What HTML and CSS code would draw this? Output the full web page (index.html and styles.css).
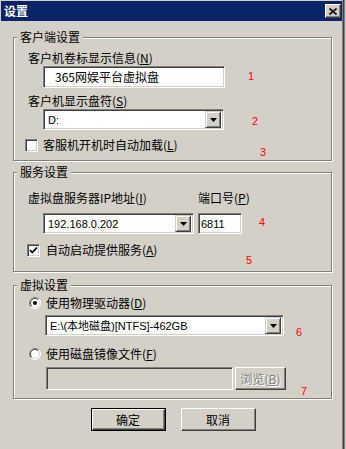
FILE: index.html
```html
<!DOCTYPE html>
<html lang="zh-CN">
<head>
    <meta charset="UTF-8">
    <meta name="viewport" content="width=device-width, initial-scale=1.0">
    <title>设置</title>
    <link rel="stylesheet" href="styles.css">
</head>
<body>
    <div class="window">
        <div class="titlebar">
            <span class="title">设置</span>
            <span class="close">
                <svg width="8" height="7" viewBox="0 0 8 7"><path d="M0.5 0.5 L7.5 6.5 M7.5 0.5 L0.5 6.5" stroke="#000" stroke-width="1.6" fill="none"/></svg>
            </span>
        </div>

        <div class="content">
            <!-- 客户端设置 -->
            <fieldset class="group group-client">
                <legend>客户端设置</legend>
                <div class="label first">客户机卷标显示信息(<u>N</u>)</div>
                <div class="field volume">365网娱平台虚拟盘</div>
                <div class="label">客户机显示盘符(<u>S</u>)</div>
                <div class="field combo drive">
                    <span class="value">D:</span>
                    <span class="drop"><svg width="7" height="4" viewBox="0 0 7 4"><path d="M0 0 H7 L3.5 4 Z" fill="#000"/></svg></span>
                </div>
                <div class="check autoload">
                    <span class="box"></span>
                    <span>客服机开机时自动加载(<u>L</u>)</span>
                </div>
            </fieldset>

            <!-- 服务设置 -->
            <fieldset class="group group-server">
                <legend>服务设置</legend>
                <div class="server-labels">
                    <span class="ip-label">虚拟盘服务器IP地址(<u>I</u>)</span>
                    <span>端口号(<u>P</u>)</span>
                </div>
                <div class="server-row">
                    <div class="field combo ip">
                        <span class="value">192.168.0.202</span>
                        <span class="drop"><svg width="7" height="4" viewBox="0 0 7 4"><path d="M0 0 H7 L3.5 4 Z" fill="#000"/></svg></span>
                    </div>
                    <div class="field port"><span class="value">6811</span></div>
                </div>
                <div class="check autostart">
                    <span class="box">
                        <svg width="9" height="9" viewBox="0 0 9 9"><path d="M1 4 L3.3 6.5 L8 1.5" stroke="#000" stroke-width="1.8" fill="none"/></svg>
                    </span>
                    <span>自动启动提供服务(<u>A</u>)</span>
                </div>
            </fieldset>

            <!-- 虚拟设置 -->
            <fieldset class="group group-virtual">
                <legend>虚拟设置</legend>
                <div class="radio first-radio">
                    <svg class="dot" width="12" height="12" viewBox="0 0 12 12">
                        <circle cx="6" cy="6" r="5.5" fill="#fff"/>
                        <path d="M9.9 2.1 A5.5 5.5 0 0 0 2.1 9.9" stroke="#808080" fill="none"/>
                        <path d="M2.1 9.9 A5.5 5.5 0 0 0 9.9 2.1" stroke="#fff" fill="none"/>
                        <path d="M9.2 2.8 A4.5 4.5 0 0 0 2.8 9.2" stroke="#404040" fill="none"/>
                        <path d="M2.8 9.2 A4.5 4.5 0 0 0 9.2 2.8" stroke="#d4d0c8" fill="none"/>
                        <circle cx="6" cy="6" r="2" fill="#000"/>
                    </svg>
                    <span>使用物理驱动器(<u>D</u>)</span>
                </div>
                <div class="field combo disk">
                    <span class="value">E:\(本地磁盘)[NTFS]-462GB</span>
                    <span class="drop"><svg width="7" height="4" viewBox="0 0 7 4"><path d="M0 0 H7 L3.5 4 Z" fill="#000"/></svg></span>
                </div>
                <div class="radio second-radio">
                    <svg class="dot" width="12" height="12" viewBox="0 0 12 12">
                        <circle cx="6" cy="6" r="5.5" fill="#fff"/>
                        <path d="M9.9 2.1 A5.5 5.5 0 0 0 2.1 9.9" stroke="#808080" fill="none"/>
                        <path d="M2.1 9.9 A5.5 5.5 0 0 0 9.9 2.1" stroke="#fff" fill="none"/>
                        <path d="M9.2 2.8 A4.5 4.5 0 0 0 2.8 9.2" stroke="#404040" fill="none"/>
                        <path d="M2.8 9.2 A4.5 4.5 0 0 0 9.2 2.8" stroke="#d4d0c8" fill="none"/>
                    </svg>
                    <span>使用磁盘镜像文件(<u>F</u>)</span>
                </div>
                <div class="image-row">
                    <div class="field disabled"></div>
                    <span class="btn browse">浏览(<u>B</u>)</span>
                </div>
            </fieldset>

            <div class="buttons">
                <span class="btn default"><span class="inner">确定</span></span>
                <span class="btn">取消</span>
            </div>
        </div>

        <!-- 标注 -->
        <span class="mark m1">1</span>
        <span class="mark m2">2</span>
        <span class="mark m3">3</span>
        <span class="mark m4">4</span>
        <span class="mark m5">5</span>
        <span class="mark m6">6</span>
        <span class="mark m7">7</span>
    </div>
</body>
</html>
```

FILE: styles.css
```css
body {
    margin: 0;
    background-color: #d4d0c8;
    font-family: "Noto Sans CJK SC", sans-serif;
    font-size: 12px;
    line-height: 14px;
    color: #000;
}

.window {
    position: relative;
    width: 341px;
    height: 448px;
    padding: 1px 0 0 1px;
    border-right: 1px solid #808080;
    box-shadow: 1px 0 0 #404040, 2px 0 0 #808080;
    background-color: #d4d0c8;
}

.titlebar {
    height: 20px;
    background-color: #0a246a;
    display: flex;
    align-items: center;
    justify-content: space-between;
}

.title {
    color: #fff;
    font-weight: bold;
    padding-left: 3px;
}

.close {
    width: 14px;
    height: 12px;
    margin-right: 1px;
    display: flex;
    align-items: center;
    justify-content: center;
    background-color: #d4d0c8;
    border: 1px solid;
    border-color: #fff #404040 #404040 #fff;
    box-shadow: inset -1px -1px 0 #808080;
}

.content {
    padding: 0 10px 0 12px;
}

/* 分组框 */
.group {
    margin: 0;
    padding: 0 0 8px 0;
    min-width: 0;
    border: 1px solid #808080;
    box-shadow: inset 1px 1px 0 #fff, 1px 1px 0 #fff;
}

.group legend {
    margin-left: 3px;
    padding: 0 3px;
    background-color: #d4d0c8;
    line-height: 14px;
}

.group-client {
    margin-top: 9px;
}

.group-server {
    margin-top: 4px;
    padding-bottom: 14px;
}

.group-virtual {
    margin-top: 6px;
    padding-bottom: 8px;
}

.label {
    margin: 6px 0 0 14px;
}

.label.first {
    margin-top: 7px;
}

/* 输入框 */
.field {
    box-sizing: border-box;
    background-color: #fff;
    border: 1px solid;
    border-color: #808080 #fff #fff #808080;
    box-shadow: inset 1px 1px 0 #404040, inset -1px -1px 0 #d4d0c8;
    display: flex;
    align-items: center;
}

.value {
    font-family: "Liberation Sans", "Noto Sans CJK SC", sans-serif;
    font-size: 11px;
    padding-left: 2px;
    white-space: nowrap;
}

.volume {
    margin: 1px 0 0 29px;
    width: 182px;
    height: 22px;
    padding-left: 11px;
}

.combo {
    height: 21px;
    justify-content: space-between;
    padding: 2px;
}

.drop {
    width: 14px;
    height: 15px;
    display: flex;
    align-items: center;
    justify-content: center;
    background-color: #d4d0c8;
    border: 1px solid;
    border-color: #d4d0c8 #404040 #404040 #d4d0c8;
    box-shadow: inset 1px 1px 0 #fff, inset -1px -1px 0 #808080;
}

.drive {
    margin: 1px 0 0 29px;
    width: 181px;
}

/* 复选框 */
.check {
    display: flex;
    align-items: center;
}

.box {
    box-sizing: border-box;
    width: 13px;
    height: 13px;
    background-color: #fff;
    border: 1px solid;
    border-color: #808080 #fff #fff #808080;
    box-shadow: inset 1px 1px 0 #404040, inset -1px -1px 0 #d4d0c8;
    display: flex;
    align-items: center;
    justify-content: center;
}

.autoload {
    margin: 8px 0 0 11px;
    gap: 5px;
}

.server-labels {
    margin: 12px 0 0 14px;
    display: flex;
}

.ip-label {
    width: 170px;
}

.server-row {
    margin: 8px 0 0 29px;
    display: flex;
    gap: 4px;
}

.ip {
    width: 151px;
}

.port {
    width: 44px;
    height: 21px;
}

.autostart {
    margin: 9px 0 0 13px;
    gap: 6px;
}

/* 单选框 */
.radio {
    display: flex;
    align-items: center;
    gap: 5px;
    margin-left: 15px;
}

.first-radio {
    margin-top: 4px;
}

.disk {
    margin: 5px 0 0 31px;
    width: 239px;
}

.second-radio {
    margin-top: 11px;
}

.image-row {
    margin: 6px 0 0 32px;
    display: flex;
    gap: 2px;
}

.disabled {
    width: 187px;
    height: 23px;
    background-color: #d4d0c8;
}

/* 按钮 */
.btn {
    box-sizing: border-box;
    display: flex;
    align-items: center;
    justify-content: center;
    width: 75px;
    height: 23px;
    background-color: #d4d0c8;
    border: 1px solid;
    border-color: #fff #404040 #404040 #fff;
    box-shadow: inset -1px -1px 0 #808080;
}

.browse {
    width: 51px;
    color: #808080;
    text-shadow: 1px 1px 0 #fff;
}

.buttons {
    margin-top: 9px;
    display: flex;
    justify-content: center;
    gap: 15px;
    padding-left: 1px;
}

.btn.default {
    border: 1px solid #000;
    box-shadow: none;
}

.btn.default .inner {
    box-sizing: border-box;
    width: 100%;
    height: 100%;
    display: flex;
    align-items: center;
    justify-content: center;
    border: 1px solid;
    border-color: #fff #404040 #404040 #fff;
    box-shadow: inset -1px -1px 0 #808080;
}

/* 红色标注数字 */
.mark {
    position: absolute;
    color: #ff0000;
    font-family: "Liberation Sans", sans-serif;
    font-size: 11px;
    line-height: 12px;
}

.m1 { left: 248px; top: 70px; }
.m2 { left: 252px; top: 115px; }
.m3 { left: 260px; top: 146px; }
.m4 { left: 259px; top: 216px; }
.m5 { left: 246px; top: 254px; }
.m6 { left: 296px; top: 326px; }
.m7 { left: 301px; top: 385px; }
```
